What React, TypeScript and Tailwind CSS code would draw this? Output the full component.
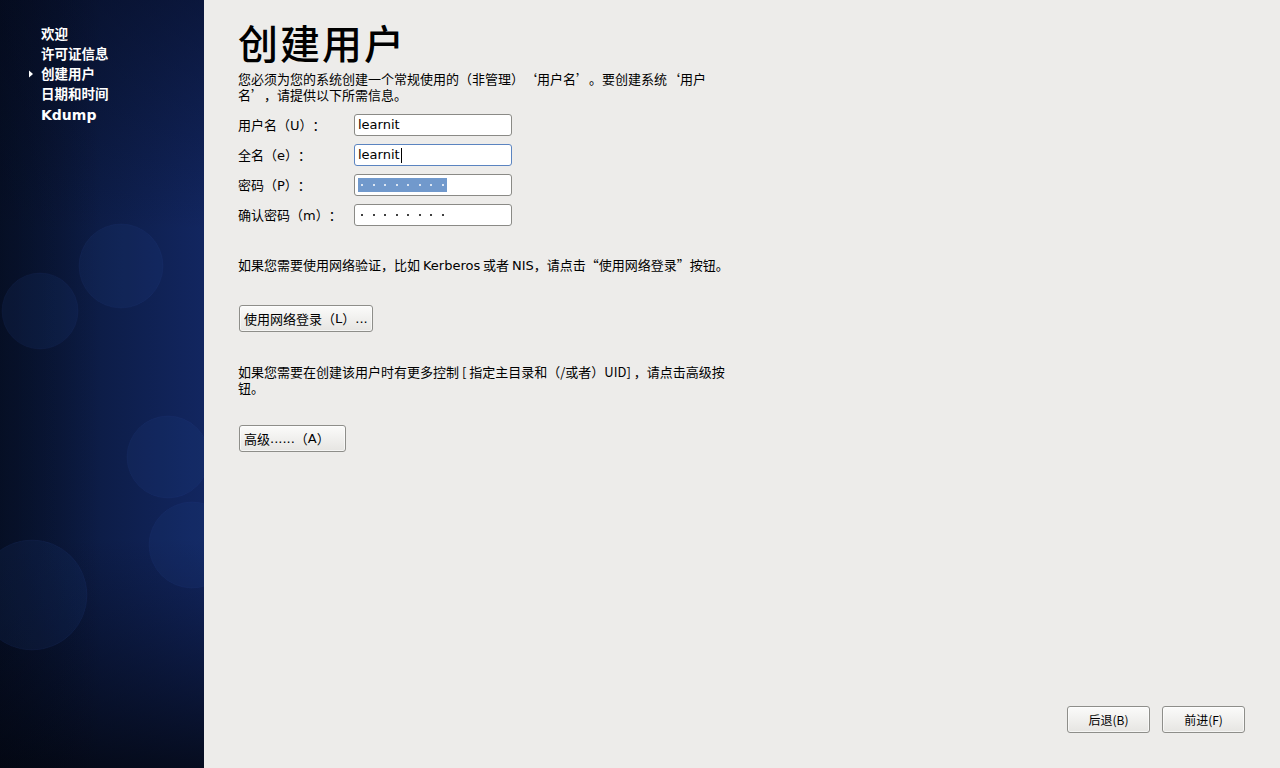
import React from "react";

const cjk = { fontFamily: '"Noto Sans CJK SC", "DejaVu Sans", sans-serif' };
const dv = { fontFamily: '"DejaVu Sans", "Noto Sans CJK SC", sans-serif' };

function SidebarArt() {
  return (
    <svg className="absolute inset-0 h-full w-full" viewBox="0 0 204 768" preserveAspectRatio="none">
      <defs>
        <linearGradient id="h" x1="0" y1="0" x2="1" y2="0">
          <stop offset="0" stopColor="#081430" />
          <stop offset="1" stopColor="#122660" />
        </linearGradient>
        <linearGradient id="v" x1="0" y1="0" x2="0" y2="1">
          <stop offset="0" stopColor="#050b20" stopOpacity="0.55" />
          <stop offset="0.3" stopColor="#050b20" stopOpacity="0" />
          <stop offset="0.7" stopColor="#050b20" stopOpacity="0" />
          <stop offset="1" stopColor="#03060f" stopOpacity="0.8" />
        </linearGradient>
        <linearGradient id="l" x1="0" y1="0" x2="1" y2="0">
          <stop offset="0" stopColor="#02050f" stopOpacity="0.35" />
          <stop offset="0.5" stopColor="#02050f" stopOpacity="0" />
        </linearGradient>
      </defs>
      <rect width="204" height="768" fill="url(#h)" />
      <rect width="204" height="768" fill="url(#v)" />
      <rect width="204" height="768" fill="url(#l)" />
      <g fill="#2a4a9a" fillOpacity="0.13" stroke="#3a5ab0" strokeOpacity="0.08">
        <circle cx="121" cy="266" r="42" />
        <circle cx="40" cy="311" r="38" />
        <circle cx="168" cy="457" r="41" />
        <circle cx="192" cy="545" r="43" />
        <circle cx="32" cy="595" r="55" />
      </g>
    </svg>
  );
}

function Input({ value, focused, selected, password }: { value: string; focused?: boolean; selected?: boolean; password?: boolean }) {
  return (
    <div
      className={`flex h-[22px] w-[158px] items-center rounded-[3px] border bg-white px-[3px] text-[13px] text-black ${
        focused ? "border-[#5b84c0]" : "border-[#8a8a86]"
      }`}
      style={dv}
    >
      {password ? (
        <span className={`flex h-[14px] items-center gap-[9.5px] px-[3px] ${selected ? "bg-[#7199cc] text-white" : "text-black"}`}>
          {Array.from({ length: 8 }).map((_, i) => (
            <span key={i} className="block h-[2px] w-[2px] rounded-full bg-current" />
          ))}
        </span>
      ) : (
        <span className="flex items-center">
          {value}
          {focused && <span className="ml-[1px] inline-block h-[15px] w-px bg-black" />}
        </span>
      )}
    </div>
  );
}

function Btn({ children, className = "" }: { children: React.ReactNode; className?: string }) {
  return (
    <div
      className={`flex items-center rounded-[3px] border border-[#8e8e8a] bg-gradient-to-b from-[#fbfbfa] to-[#e6e5e2] text-[12px] text-black shadow-[inset_0_0_0_1px_rgba(255,255,255,0.6)] ${className}`}
    >
      {children}
    </div>
  );
}

const L = ({ children }: { children: React.ReactNode }) => <span style={dv}>{children}</span>;

export default function App() {
  const nav = ["欢迎", "许可证信息", "创建用户", "日期和时间"];
  return (
    <div className="flex h-[768px] w-[1280px] overflow-hidden bg-[#edecea] [text-spacing-trim:space-all]" style={cjk}>
      <aside className="relative h-full w-[204px] shrink-0">
        <SidebarArt />
        <nav className="relative flex flex-col pt-[24px] pl-[41px] text-[13.5px] font-bold text-white">
          {nav.map((n) => (
            <div key={n} className="relative flex h-[20px] items-center leading-none">
              {n === "创建用户" && (
                <svg className="absolute left-[-13px] top-[6px]" width="6" height="8" viewBox="0 0 6 8">
                  <path d="M1 0.5 L5 4 L1 7.5 Z" fill="#ffffff" />
                </svg>
              )}
              {n}
            </div>
          ))}
          <div className="flex h-[22px] items-center text-[14px] leading-none" style={{ fontFamily: '"DejaVu Sans", sans-serif' }}>
            Kdump
          </div>
        </nav>
      </aside>

      <main className="relative flex flex-1 flex-col pl-[34px]">
        <h1 className="mt-[18px] h-[48px] text-[40px] font-medium leading-[48px] tracking-[2px] text-black">
          创建用户
        </h1>
        <p className="mt-[5px] w-[474px] text-[13px] leading-[16px] text-black">
          您必须为您的系统创建一个常规使用的（非管理）‘用户名’。要创建系统‘用户名’，请提供以下所需信息。
        </p>

        <div className="mt-[11px] flex flex-col gap-[8px] text-[13px] text-black">
          {[
            { l: <>用户名（<L>U</L>）：</>, k: "u", v: <Input value="learnit" /> },
            { l: <>全名（<L>e</L>）：</>, k: "e", v: <Input value="learnit" focused /> },
            { l: <>密码（<L>P</L>）：</>, k: "p", v: <Input value="" password selected /> },
            { l: <>确认密码（<L>m</L>）：</>, k: "m", v: <Input value="" password /> },
          ].map((r) => (
            <div key={r.k} className="flex items-center">
              <span className="w-[116px] leading-none">{r.l}</span>
              {r.v}
            </div>
          ))}
        </div>

        <p className="mt-[31px] text-[13px] leading-[16px] text-black">
          如果您需要使用网络验证，比如 <L>Kerberos</L> 或者 <L>NIS</L>，请点击“使用网络登录”按钮。
        </p>
        <Btn className="ml-[1px] mt-[31px] h-[27px] w-[134px] pl-[4px] text-[13px]">使用网络登录（<L>L</L>）<L>...</L></Btn>

        <p className="mt-[32px] w-[505px] text-[13px] leading-[16px] text-black">
          如果您需要在创建该用户时有更多控制 [ 指定主目录和（/或者）UID] ，请点击高级按钮。
        </p>
        <Btn className="ml-[1px] mt-[29px] h-[27px] w-[107px] pl-[4px] text-[13px]">高级<L>......</L>（<L>A</L>）</Btn>

        <div className="mt-auto mb-[35px] mr-[35px] flex justify-end gap-[12px]">
          <Btn className="h-[27px] w-[83px] justify-center">后退(B)</Btn>
          <Btn className="h-[27px] w-[83px] justify-center">前进(F)</Btn>
        </div>
      </main>
    </div>
  );
}
